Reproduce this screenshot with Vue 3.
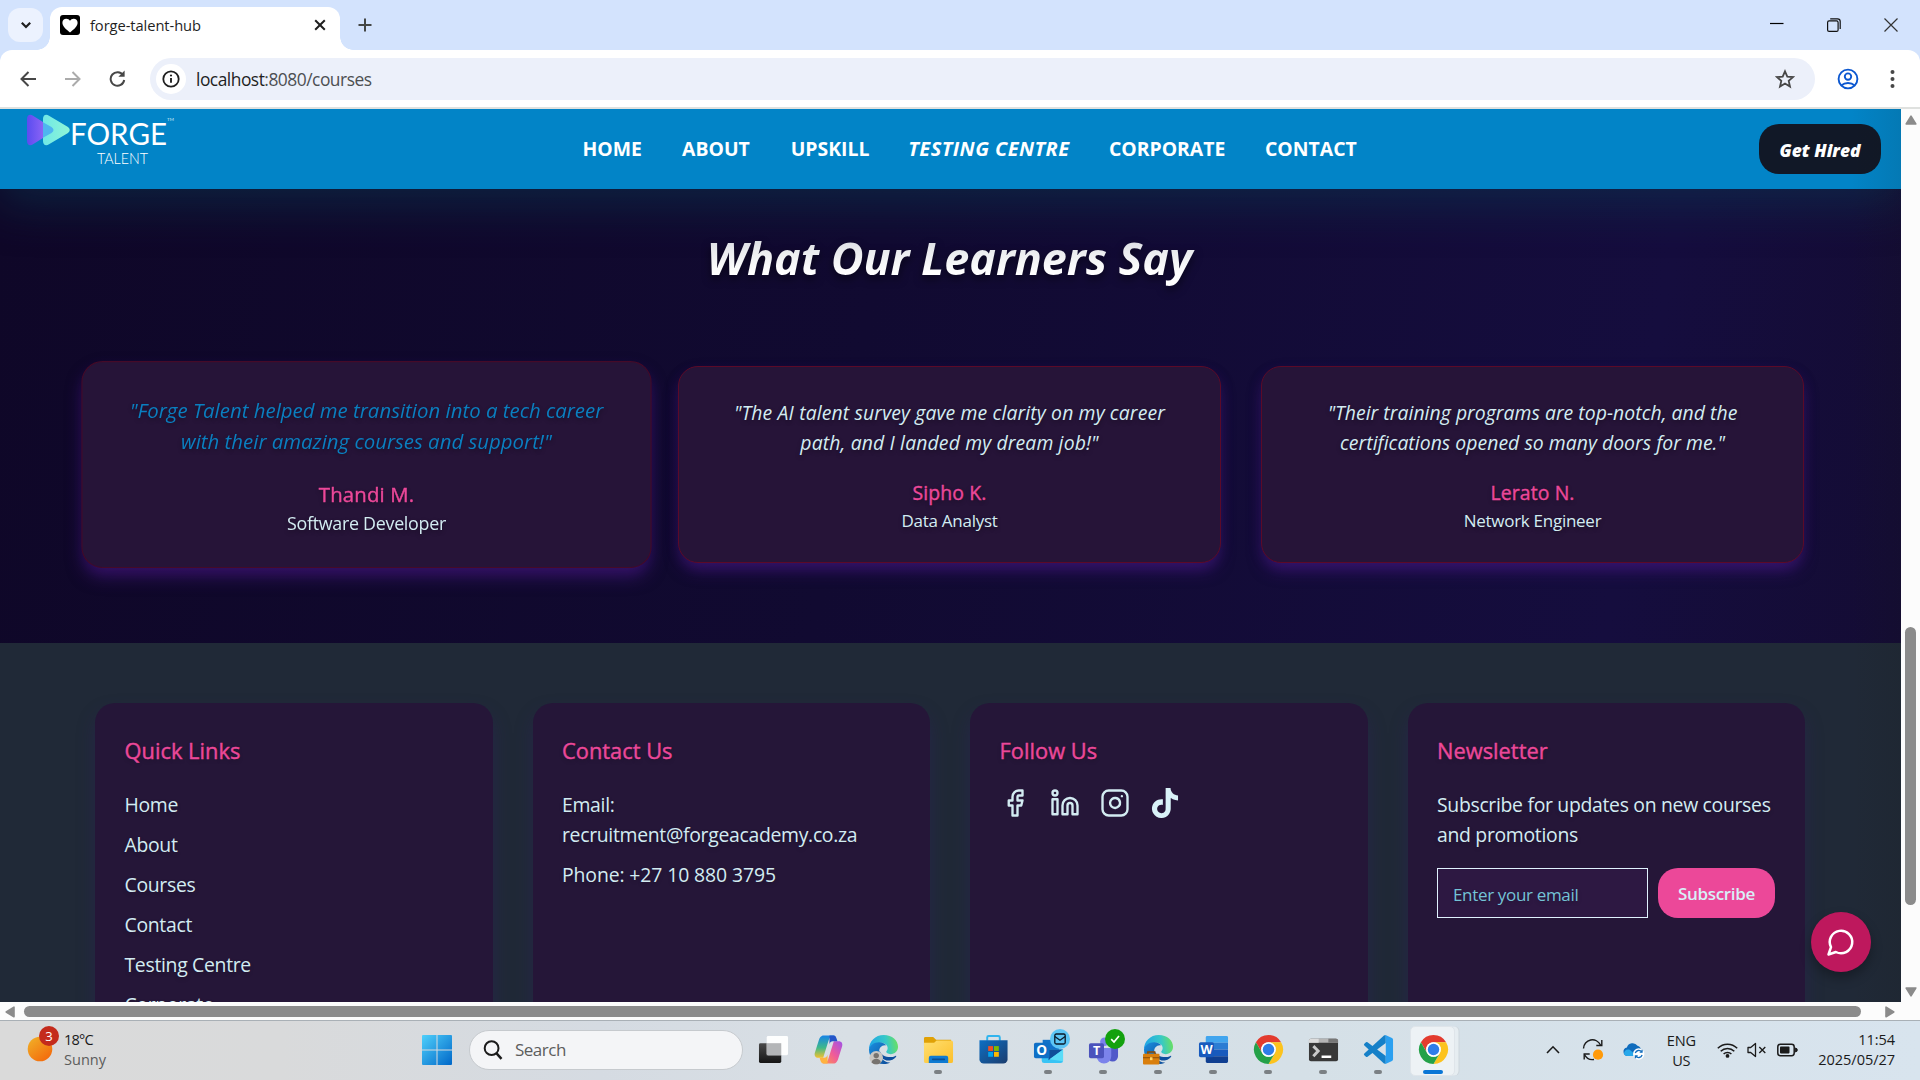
<script setup>
const nav = [
  { label: 'HOME', w: 60 },
  { label: 'ABOUT', w: 69 },
  { label: 'UPSKILL', w: 78 },
  { label: 'TESTING CENTRE', w: 161, active: true },
  { label: 'CORPORATE', w: 116.5 },
  { label: 'CONTACT', w: 92 },
]

const testimonials = [
  {
    lines: ['"Forge Talent helped me transition into a tech career', 'with their amazing courses and support!"'],
    name: 'Thandi M.',
    role: 'Software Developer',
    hovered: true,
  },
  {
    lines: ['"The AI talent survey gave me clarity on my career', 'path, and I landed my dream job!"'],
    name: 'Sipho K.',
    role: 'Data Analyst',
  },
  {
    lines: ['"Their training programs are top-notch, and the', 'certifications opened so many doors for me."'],
    name: 'Lerato N.',
    role: 'Network Engineer',
  },
]

const links = ['Home', 'About', 'Courses', 'Contact', 'Testing Centre', 'Corporate']

const apps = [
  { id: 'taskview' },
  { id: 'copilot' },
  { id: 'edge' },
  { id: 'files', running: true },
  { id: 'store' },
  { id: 'outlook', running: true },
  { id: 'teams', running: true },
  { id: 'edgework', running: true },
  { id: 'word', running: true },
  { id: 'chrome', running: true },
  { id: 'terminal', running: true },
  { id: 'code', running: true },
  { id: 'chrome', current: true },
]
</script>

<template>
  <div class="screen">
    <header class="tabstrip">
      <button class="tab-search">
        <svg width="12" height="12" viewBox="0 0 12 12"><path d="M1.800 3.800 6 8l4.200-4.200" fill="none" stroke="#1f1f1f" stroke-width="2.200" /></svg>
      </button>
      <div class="tab">
        <span class="favicon">
          <svg width="16" height="15" viewBox="0 0 16 15"><path d="M8 14.500C4 11 .4 8.400.4 4.700.4 2.300 2.100.700 4.300.700 5.900.700 7.200 1.500 8 2.800 8.800 1.500 10.100.700 11.700.700c2.200 0 3.900 1.600 3.900 4C15.600 8.400 12 11 8 14.500z" fill="#fff" /></svg>
        </span>
        <span class="tab-title">forge-talent-hub</span>
        <svg class="tab-close" width="12" height="12" viewBox="0 0 12 12"><path d="M1.200 1.200l9.600 9.600M10.800 1.200l-9.600 9.600" stroke="#1f1f1f" stroke-width="2" /></svg>
      </div>
      <svg class="tab-new" width="14" height="14" viewBox="0 0 14 14"><path d="M7 .5v13M.5 7h13" stroke="#444746" stroke-width="2" /></svg>
      <div class="window-controls">
        <svg width="14" height="14" viewBox="0 0 14 14"><path d="M0 5.500h13.500" stroke="#000" stroke-width="1.200" /></svg>
        <svg width="14" height="14" viewBox="0 0 14 14"><g fill="none" stroke="#111" stroke-width="1.200"><rect x=".6" y="2.900" width="10.500" height="10.500" rx="1.500" /><path d="M3.200.8h7.300a2.700 2.700 0 0 1 2.700 2.700v7.400" /></g></svg>
        <svg width="14" height="14" viewBox="0 0 14 14"><path d="M.5.5l13 13M13.500.5l-13 13" stroke="#333" stroke-width="1.200" /></svg>
      </div>
    </header>

    <div class="toolbar-wrap">
      <div class="toolbar">
        <svg class="ic-back" width="16" height="16" viewBox="0 0 16 16"><path d="M8.500 1 1.500 8l7 7M1.500 8H16" fill="none" stroke="#474747" stroke-width="2" /></svg>
        <svg class="ic-fwd" width="16" height="16" viewBox="0 0 16 16"><path d="M7.500 1l7 7-7 7M14.500 8H0" fill="none" stroke="#ababab" stroke-width="2" /></svg>
        <svg class="ic-reload" width="17" height="17" viewBox="0 0 17 17"><path d="M14.200 5.300A6.800 6.800 0 1 0 15.200 10" fill="none" stroke="#474747" stroke-width="2" /><path d="M15.600.6v6.200H9.400z" fill="#474747" /></svg>
        <div class="address">
          <span class="site-info">
            <svg width="18" height="18" viewBox="0 0 18 18"><circle cx="9" cy="9" r="7.700" fill="none" stroke="#1f1f1f" stroke-width="1.800" /><path d="M9 8v4.800" stroke="#1f1f1f" stroke-width="1.900" /><circle cx="9" cy="5.500" r="1.100" fill="#1f1f1f" /></svg>
          </span>
          <span class="url">localhost<span class="rest">:8080/courses</span></span>
          <svg class="ic-star" width="20" height="20" viewBox="0 0 20 20"><path d="M10 2.300l2.300 5.300 5.700.5-4.300 3.800 1.300 5.700-5-3-5 3 1.300-5.700L2 8.100l5.700-.5z" fill="none" stroke="#474747" stroke-width="1.800" /></svg>
        </div>
        <svg class="ic-user" width="22" height="22" viewBox="0 0 22 22"><g fill="none" stroke="#0b57d0" stroke-width="1.900"><circle cx="11" cy="11" r="9.400" /><circle cx="11" cy="8.600" r="3.200" /><path d="M4.300 17.500c3.700-3.300 9.700-3.300 13.400 0" /></g></svg>
        <svg class="ic-more" width="5" height="20" viewBox="0 0 5 20"><g fill="#474747"><circle cx="2.500" cy="3" r="2" /><circle cx="2.500" cy="10" r="2" /><circle cx="2.500" cy="17" r="2" /></g></svg>
      </div>
    </div>

    <div class="viewport">
      <main class="page">
        <nav class="navbar">
          <svg class="logo" width="150" height="56" viewBox="0 0 150 56">
            <defs>
              <linearGradient id="lgViolet" x1="0" y1="0" x2="1" y2="0"><stop offset="0" stop-color="#5a4cf0" /><stop offset="1" stop-color="#8a63f5" /></linearGradient>
              <linearGradient id="lgMint" x1="0" y1="0" x2="1" y2="0"><stop offset="0" stop-color="#6fe8e6" /><stop offset="1" stop-color="#8ff5d6" /></linearGradient>
            </defs>
            <path d="M0 5C0 1 3-.3 6 1.700L16 8V24L6 30.300C3 32.300 0 31 0 27z" fill="url(#lgViolet)" />
            <path d="M16 5C16 1 19-.3 22 1.700L41 13q3.500 3 0 6L22 30.300C19 32.300 16 31 16 27z" fill="url(#lgMint)" />
            <path d="M16 8.200L24.500 13q4 3 0 6L16 23.800z" fill="#4fb4f0" />
            <text class="logo-word" x="43" y="31" textLength="97" lengthAdjust="spacingAndGlyphs">FORGE</text>
            <text class="logo-tm" x="140" y="7">TM</text>
            <text class="logo-sub" x="70" y="50" textLength="51" lengthAdjust="spacingAndGlyphs">TALENT</text>
          </svg>
          <div class="nav-links">
            <a v-for="n in nav" :key="n.label" :class="{ active: n.active }" :style="{ width: n.w + 'px' }">{{ n.label }}</a>
          </div>
          <button class="hire">Get Hired</button>
        </nav>

        <section class="testimonials">
          <h2>What Our Learners Say</h2>
          <div class="cards">
            <article v-for="t in testimonials" :key="t.name" class="card" :class="{ hovered: t.hovered }">
              <p class="quote"><span v-for="l in t.lines" :key="l">{{ l }}</span></p>
              <p class="name">{{ t.name }}</p>
              <p class="role">{{ t.role }}</p>
            </article>
          </div>
        </section>

        <footer class="footer">
          <div class="fcard">
            <h3>Quick Links</h3>
            <ul><li v-for="l in links" :key="l">{{ l }}</li></ul>
          </div>
          <div class="fcard">
            <h3>Contact Us</h3>
            <ul><li>Email:<br />recruitment@forgeacademy.co.za</li><li class="phone">Phone: +27 10 880 3795</li></ul>
          </div>
          <div class="fcard">
            <h3>Follow Us</h3>
            <div class="social">
              <svg viewBox="0 0 24 24"><path d="M18 2h-3a5 5 0 0 0-5 5v3H7v4h3v8h4v-8h3l1-4h-4V7a1 1 0 0 1 1-1h3z" /></svg>
              <svg viewBox="0 0 24 24"><path d="M16 8a6 6 0 0 1 6 6v7h-4v-7a2 2 0 0 0-2-2 2 2 0 0 0-2 2v7h-4v-7a6 6 0 0 1 6-6z" /><rect x="2" y="9" width="4" height="12" /><circle cx="4" cy="4" r="2" /></svg>
              <svg viewBox="0 0 24 24"><rect x="2" y="2" width="20" height="20" rx="5" /><path d="M16 11.370A4 4 0 1 1 12.630 8 4 4 0 0 1 16 11.370zM17.500 6.500h.01" /></svg>
              <svg viewBox="0 0 24 24" class="solid"><path d="M12.525.02c1.310-.02 2.610-.01 3.910-.02.08 1.530.63 3.090 1.750 4.170 1.120 1.110 2.700 1.620 4.240 1.790v4.030c-1.440-.05-2.890-.35-4.200-.97-.57-.26-1.100-.59-1.620-.93-.01 2.920.01 5.840-.02 8.750-.08 1.400-.54 2.790-1.350 3.940-1.310 1.920-3.580 3.170-5.910 3.210-1.430.08-2.860-.31-4.080-1.030-2.020-1.190-3.440-3.370-3.650-5.710-.02-.5-.03-1-.01-1.490.18-1.900 1.120-3.720 2.580-4.960 1.660-1.440 3.980-2.130 6.150-1.720.02 1.480-.04 2.960-.04 4.440-.99-.32-2.150-.23-3.020.37-.63.41-1.110 1.040-1.360 1.750-.21.51-.15 1.070-.14 1.610.24 1.640 1.820 3.020 3.500 2.870 1.120-.01 2.190-.66 2.770-1.610.19-.33.4-.67.41-1.060.1-1.790.06-3.570.07-5.360.01-4.030-.01-8.050.02-12.070z" /></svg>
            </div>
          </div>
          <div class="fcard">
            <h3>Newsletter</h3>
            <p class="blurb">Subscribe for updates on new courses<br />and promotions</p>
            <div class="signup">
              <div class="email">Enter your email</div>
              <button>Subscribe</button>
            </div>
          </div>
        </footer>

        <div class="edge-shade"></div>
        <button class="chat">
          <svg width="30" height="30" viewBox="0 0 24 24"><path d="M7.900 20A9 9 0 1 0 4 16.100L2 22Z" fill="none" stroke="#fff" stroke-width="2" stroke-linejoin="round" /></svg>
        </button>
      </main>
      <div class="vscroll">
        <svg width="12" height="10" viewBox="0 0 12 10"><path d="M6 1.200 10.800 9H1.200z" fill="#8b8b8b" stroke="#8b8b8b" stroke-width="1.600" stroke-linejoin="round" /></svg>
        <span class="vthumb"></span>
        <svg width="12" height="10" viewBox="0 0 12 10"><path d="M6 8.800 10.800 1H1.200z" fill="#8b8b8b" stroke="#8b8b8b" stroke-width="1.600" stroke-linejoin="round" /></svg>
      </div>
    </div>
    <div class="hscroll">
      <svg width="10" height="12" viewBox="0 0 10 12"><path d="M1.200 6 9 1.200v9.600z" fill="#8b8b8b" stroke="#8b8b8b" stroke-width="1.600" stroke-linejoin="round" /></svg>
      <span class="hthumb"></span>
      <svg width="10" height="12" viewBox="0 0 10 12"><path d="M8.800 6 1 1.200v9.600z" fill="#8b8b8b" stroke="#8b8b8b" stroke-width="1.600" stroke-linejoin="round" /></svg>
    </div>

    <div class="taskbar">
      <svg width="0" height="0" class="defs">
        <defs>
          <linearGradient id="gSun" x1="0" y1="0" x2=".8" y2="1"><stop offset="0" stop-color="#f0b429" /><stop offset="1" stop-color="#f4680b" /></linearGradient>
          <linearGradient id="gWin" x1="0" y1="0" x2="1" y2="1"><stop offset="0" stop-color="#4fd0fb" /><stop offset="1" stop-color="#0067c8" /></linearGradient>
          <linearGradient id="gEdgeTop" x1="0" y1=".5" x2="1" y2=".4"><stop offset="0" stop-color="#1fa4e8" /><stop offset=".6" stop-color="#36c8c8" /><stop offset="1" stop-color="#6be060" /></linearGradient>
          <linearGradient id="gEdgeLow" x1="0" y1="0" x2="1" y2="1"><stop offset="0" stop-color="#1b8fe0" /><stop offset="1" stop-color="#0b4a97" /></linearGradient>
          <linearGradient id="gCopL" x1="0" y1="0" x2="0" y2="1"><stop offset="0" stop-color="#1683e8" /><stop offset=".55" stop-color="#3fb98a" /><stop offset="1" stop-color="#f2c12e" /></linearGradient>
          <linearGradient id="gCopR" x1="1" y1="0" x2="0" y2="1"><stop offset="0" stop-color="#a052e8" /><stop offset=".5" stop-color="#ef5b9a" /><stop offset="1" stop-color="#ff9a4a" /></linearGradient>
          <linearGradient id="gFolder" x1="0" y1="0" x2="1" y2="1"><stop offset="0" stop-color="#ffdf70" /><stop offset="1" stop-color="#fcbf2b" /></linearGradient>
          <linearGradient id="gStore" x1="0" y1="0" x2="1" y2="1"><stop offset="0" stop-color="#0d6fc4" /><stop offset="1" stop-color="#1c3d6e" /></linearGradient>
          <linearGradient id="gTask" x1="0" y1="0" x2="0" y2="1"><stop offset="0" stop-color="#4a4a4a" /><stop offset="1" stop-color="#151515" /></linearGradient>
          <symbol id="edgeMark" viewBox="0 0 32 32">
            <path d="M1 16C1 7.500 7.500 1 16.300 1 25 1 31 6.600 31 13.200c0 4.600-3.400 7.600-7.600 7.600-3 0-4.600-1.200-4.600-2.400 0-1 1.500-1.500 1.500-4 0-3-3-5.400-7-5.400C7 9 2 13 1 16z" fill="url(#gEdgeTop)" />
            <path d="M1 16C2 11.500 6.500 8.600 11.500 8.600c3.600 0 6.200 1.400 7.500 3.300-4.500-1-8 2.500-7.400 7.200C12.300 24.500 17 30 23 29.300 20.800 30.500 18.500 31 16 31 7.600 31 1 24.500 1 16z" fill="url(#gEdgeLow)" />
            <path d="M12 17c-1 7 5 11.500 11.500 10.200 2.500-.6 4.600-2.200 5.600-3.900.3-.6-.2-1-.8-.7C23 25.300 13.500 23.500 12 17z" fill="#0d4f9e" />
          </symbol>
          <symbol id="chromeMark" viewBox="0 0 32 32">
            <path d="M29 8.500A15 15 0 0 0 3 8.500L9.500 19.750A7.500 7.500 0 0 1 16 8.500z" fill="#e33b2e" />
            <path d="M29 8.500A15 15 0 0 0 3 8.500L9.500 19.750A7.500 7.500 0 0 1 16 8.500z" fill="#fcc31e" transform="rotate(120 16 16)" />
            <path d="M29 8.500A15 15 0 0 0 3 8.500L9.500 19.750A7.500 7.500 0 0 1 16 8.500z" fill="#24a148" transform="rotate(240 16 16)" />
            <circle cx="16" cy="16" r="7.500" fill="#fff" /><circle cx="16" cy="16" r="5.900" fill="#2f7de9" />
          </symbol>
        </defs>
      </svg>

      <div class="weather">
        <span class="sun"><svg width="26" height="26" viewBox="0 0 26 26"><circle cx="13" cy="13" r="12.300" fill="url(#gSun)" /></svg><b class="count">3</b></span>
        <span class="wtext"><span class="temp">18°C</span><span class="cond">Sunny</span></span>
      </div>

      <div class="launcher">
        <svg class="win" width="30" height="30" viewBox="0 0 30 30"><path d="M0 1a1 1 0 0 1 1-1h13.500v14.500H0zM15.500 0H29a1 1 0 0 1 1 1v13.500H15.500zM0 15.500h14.500V30H1a1 1 0 0 1-1-1zM15.500 15.500H30V29a1 1 0 0 1-1 1H15.500z" fill="url(#gWin)" /></svg>
        <div class="search">
          <svg width="20" height="20" viewBox="0 0 20 20"><g fill="none" stroke="#1b1b1b" stroke-width="2"><circle cx="8.600" cy="8.200" r="6.900" /><path d="M13.300 13.200 18.500 18.800" stroke-width="2.500" /></g></svg>
          <span>Search</span>
        </div>
        <div v-for="(a, i) in apps" :key="i" class="app" :class="{ running: a.running, current: a.current }">
          <svg width="32" height="32" viewBox="0 0 32 32">
            <template v-if="a.id === 'taskview'"><rect x="1" y="9.500" width="23" height="20.500" rx="1.500" fill="url(#gTask)" /><rect x="9" y="2" width="22" height="20" rx="1.500" fill="#fff" opacity=".95" /><rect x="9" y="9.500" width="15" height="12.500" fill="#b4b6b8" /></template>
            <template v-else-if="a.id === 'copilot'">
              <path d="M21 1.500H11C8 1.500 6.800 4 6 6.500L2 19c-1 3.200.5 5.500 3.500 5.500h5L16 7c.8-2.500 1.500-4 3-4h4C22.800 2 22 1.500 21 1.500z" fill="url(#gCopL)" />
              <path d="M11 30.500h10c3 0 4.200-2.500 5-5l4-12.500c1-3.200-.5-5.500-3.500-5.500h-5L16 25c-.8 2.500-1.500 4-3 4H9c.2 1 1 1.500 2 1.500z" fill="url(#gCopR)" />
              <path d="M17 1.500h4c2 0 2.800 1.300 3.400 3.300l.8 2.700h-4.700c-2 0-2.800.9-3.500 3z" fill="#2455c8" />
              <path d="M15 30.500h-4c-2 0-2.800-1.300-3.400-3.300l-.8-2.700h4.700c2 0 2.800-.9 3.500-3z" fill="#ffb340" />
            </template>
            <template v-else-if="a.id === 'edge'"><use href="#edgeMark" /><circle cx="8.500" cy="24.500" r="7" fill="#c9c6c2" /><circle cx="8.500" cy="22.300" r="2.800" fill="#77736f" /><path d="M3.700 29.300c.6-5 9-5 9.600 0-2.500 2.600-7 2.600-9.600 0z" fill="#77736f" /></template>
            <template v-else-if="a.id === 'files'"><path d="M1 4.500A1.500 1.500 0 0 1 2.500 3h8l3 3H29v6H1z" fill="#e0a106" /><path d="M1 9h10.500l2.500-2.300h15a2 2 0 0 1 2 2V28a2 2 0 0 1-2 2H3a2 2 0 0 1-2-2z" fill="url(#gFolder)" /><path d="M6 30v-5.500a2 2 0 0 1 2-2h16a2 2 0 0 1 2 2V30z" fill="#0f7bd2" /><path d="M10 26.200h12" stroke="#0a4f94" stroke-width="1.600" stroke-linecap="round" /></template>
            <template v-else-if="a.id === 'store'"><path d="M9.500 7V3.500a1.500 1.500 0 0 1 1.500-1.500h10a1.500 1.500 0 0 1 1.500 1.500V7" fill="none" stroke="#30b4ee" stroke-width="2" /><path d="M1.500 6.500h29V26a4.500 4.500 0 0 1-4.500 4.500H6A4.500 4.500 0 0 1 1.500 26z" fill="url(#gStore)" /><path d="M10.500 12.500h5v5h-5z" fill="#f25022" /><path d="M16.500 12.500h5v5h-5z" fill="#7fba00" /><path d="M10.500 18.500h5v5h-5z" fill="#00a4ef" /><path d="M16.500 18.500h5v5h-5z" fill="#ffb900" /></template>
            <template v-else-if="a.id === 'outlook'"><path d="M10 6h17v14H10z" fill="#1272c9" /><path d="M9 16h22v11.500a2.500 2.500 0 0 1-2.500 2.500h-17A2.500 2.500 0 0 1 9 27.500z" fill="#38c4f5" /><path d="M16 16h15L16 27z" fill="#0f4f9a" /><path d="M31 16v12L17 26z" fill="#5adcf8" /><rect x="1" y="9" width="16" height="16" rx="1.800" fill="#0f6fc6" /><text x="9" y="22" class="glyph">O</text></template>
            <template v-else-if="a.id === 'teams'"><circle cx="26" cy="10" r="3.500" fill="#5059c9" /><path d="M20 14.500h11V23a5.500 5.500 0 0 1-11 0z" fill="#5059c9" /><circle cx="17" cy="8" r="4.500" fill="#7b83eb" /><path d="M9 14.500h15V23a7.500 7.500 0 0 1-15 0z" fill="#7b83eb" /><rect x="1" y="9.500" width="15.500" height="15.500" rx="1.800" fill="#4b53bc" /><text x="8.800" y="22" class="glyph tee">T</text></template>
            <template v-else-if="a.id === 'edgework'"><use href="#edgeMark" /><path d="M5 21v-2.500h7V21" fill="none" stroke="#8a4b06" stroke-width="1.600" /><rect x="0" y="20.500" width="17" height="11" rx="1" fill="#d97f0d" /><path d="M0 24.500h17" stroke="#8a4b06" stroke-width="1" /><rect x="7.200" y="24" width="2.600" height="3" fill="#ffd76b" /></template>
            <template v-else-if="a.id === 'word'"><path d="M8 3.500A1.500 1.500 0 0 1 9.500 2h20A1.500 1.500 0 0 1 31 3.500V9H8z" fill="#41a5ee" /><path d="M8 9h23v7H8z" fill="#2b7cd3" /><path d="M8 16h23v7H8z" fill="#185abd" /><path d="M8 23h23v5.500a1.500 1.500 0 0 1-1.500 1.500h-20A1.500 1.500 0 0 1 8 28.500z" fill="#103f91" /><rect x="1" y="8.500" width="15.500" height="15.500" rx="1.800" fill="#185abd" /><text x="8.800" y="21" class="glyph tee">W</text></template>
            <use v-else-if="a.id === 'chrome'" href="#chromeMark" />
            <template v-else-if="a.id === 'terminal'"><rect x="1" y="5" width="30" height="23" rx="2" fill="#383838" /><path d="M1 9V7a2 2 0 0 1 2-2h26a2 2 0 0 1 2 2v2z" fill="#b5b5b5" /><path d="M1 9V7a2 2 0 0 1 2-2h8v4z" fill="#dcdcdc" /><path d="M21 5h8a2 2 0 0 1 2 2v2H21z" fill="#777" /><path d="M5.500 12.500 10.500 17.500 5.500 23" fill="none" stroke="#c9c9c9" stroke-width="3" /><path d="M14 23.500h10" stroke="#fff" stroke-width="2.600" /></template>
            <g v-else transform="translate(1 1) scale(1.25)"><path d="M18 .2 17.100.3a1.500 1.500 0 0 0-.6.200L.3 15.260a1 1 0 0 0 0 1.480L1.650 17.940a1 1 0 0 0 1.276.057L18 6.550zM18 17.450 2.930 6a1 1 0 0 0-1.276.057L.327 7.261A1 1 0 0 0 .326 8.740L16.500 23.500l1.500.300z" fill="#1580c8" /><path d="M23.150 2.587 18.210.21a1.490 1.490 0 0 0-1.700.29c.55-.55 1.500-.16 1.500.62v21.760c0 .78-.95 1.170-1.500.62a1.490 1.490 0 0 0 1.700.29l4.940-2.380A1.500 1.500 0 0 0 24 20.060V3.940a1.500 1.500 0 0 0-.85-1.353z" fill="#2ba0f0" /></g>
          </svg>
          <span v-if="a.id === 'outlook'" class="badge mail"><svg width="12" height="12" viewBox="0 0 12 12"><g fill="none" stroke="#0a1a2a" stroke-width="1.300"><rect x=".8" y="1" width="10.400" height="10" rx="1.500" /><path d="M.8 3.500 6 7.200l5.200-3.700" /></g></svg></span>
          <span v-if="a.id === 'teams'" class="badge ok"><svg width="10" height="10" viewBox="0 0 10 10"><path d="M1.200 5.200 4 8l5-6" fill="none" stroke="#fff" stroke-width="1.700" /></svg></span>
        </div>
      </div>

      <div class="tray">
        <svg class="t-up" width="14" height="9" viewBox="0 0 14 9"><path d="M1 8l6-6.200L13 8" fill="none" stroke="#1b1b1b" stroke-width="1.600" /></svg>
        <svg class="t-sync" width="22" height="22" viewBox="0 0 22 22"><g fill="none" stroke="#1b1b1b" stroke-width="1.400"><path d="M1.500 9.500A8.900 8.900 0 0 1 18.500 6" /><path d="M19.800 1v5.500h-5.500" /><path d="M2.200 20.500V15h5.500" /><path d="M2.500 15.500a9 9 0 0 0 9.500 5" /></g><circle cx="16" cy="15.700" r="5.100" fill="#ff9a0a" /></svg>
        <svg class="t-cloud" width="22" height="18" viewBox="0 0 22 18"><path d="M4.500 14a4.300 4.300 0 0 1-.6-8.500A6 6 0 0 1 14.500 3.800 5 5 0 0 1 18 9l-3 5z" fill="#0f6cbd" /><path d="M1 11.500c0-3 3-5 6-3.500l7 6H4.500C2.500 14 1 13 1 11.500z" fill="#28a8ea" /><circle cx="15.700" cy="12" r="5.700" fill="#fff" /><g fill="none" stroke="#0f6cbd" stroke-width="1.300"><path d="M12.300 11a3.700 3.700 0 0 1 6.400-1.200M19.100 13a3.700 3.700 0 0 1-6.400 1.200" /><path d="M19 7.800v2.300h-2.300M12.400 16.200v-2.300h2.300" /></g></svg>
        <div class="lang"><span>ENG</span><span>US</span></div>
        <svg class="t-wifi" width="21" height="16" viewBox="0 0 21 16"><g fill="none" stroke="#1b1b1b" stroke-width="1.500"><path d="M.8 6.200a13.700 13.700 0 0 1 19.400 0" /><path d="M3.700 9.200a9.600 9.600 0 0 1 13.600 0" /><path d="M6.600 12a5.600 5.600 0 0 1 7.800 0" /></g><circle cx="10.500" cy="13.900" r="1.900" fill="#1b1b1b" /></svg>
        <svg class="t-vol" width="20" height="16" viewBox="0 0 20 16"><g fill="none" stroke="#1b1b1b" stroke-width="1.300"><path d="M1 5.500h2.700L8.500 1.500v13L3.700 10.500H1z" stroke-linejoin="round" /><path d="M12.300 5l6 6M18.300 5l-6 6" /></g></svg>
        <svg class="t-bat" width="21" height="14" viewBox="0 0 21 14"><rect x=".8" y="1.300" width="16.400" height="11.400" rx="2.600" fill="none" stroke="#1b1b1b" stroke-width="1.500" /><rect x="3" y="3.600" width="9.500" height="6.800" rx=".8" fill="#1b1b1b" /><path d="M18.300 5v4l1.800-.9V5.900z" fill="#1b1b1b" stroke="#1b1b1b" /></svg>
        <div class="clock"><span>11:54</span><span>2025/05/27</span></div>
      </div>
    </div>
  </div>
</template>

<style>
body { margin: 0; overflow: hidden; }
</style>

<style scoped>
* { box-sizing: border-box; }
svg { display: block; flex: none; }
p, h2, h3, ul { margin: 0; padding: 0; list-style: none; }
button { border: 0; font-family: inherit; padding: 0; display: flex; align-items: center; justify-content: center; }
.screen {
  width: 1920px; height: 1080px; overflow: hidden;
  display: flex; flex-direction: column;
  font-family: "Open Sans", "Noto Sans", sans-serif;
  background: #d3e3fd;
}

/* browser chrome */
.tabstrip { height: 50px; flex: none; display: flex; padding-left: 8px; background: #d3e3fd; }
.tab-search { width: 35px; height: 34px; margin: 8px 7px 0 0; border-radius: 12px; background: #ecf2fe; }
.tab { position: relative; width: 290px; height: 43px; margin-top: 7px; padding: 0 14px 7px 10px; border-radius: 12px 12px 0 0; background: #fff; display: flex; align-items: center; }
.tab::before, .tab::after { content: ""; position: absolute; bottom: 0; width: 13px; height: 13px; }
.tab::before { left: -13px; background: radial-gradient(circle at 0 0, transparent 12.5px, #fff 13px); }
.tab::after { right: -13px; background: radial-gradient(circle at 100% 0, transparent 12.5px, #fff 13px); }
.favicon { width: 20px; height: 20px; border-radius: 3px; background: #000; display: flex; align-items: center; justify-content: center; }
.tab-title { margin-left: 10px; font-size: 14.7px; letter-spacing: -0.07px; color: #1f1f1f; flex: 1; }
.tab-new { margin: 18px 0 0 18px; }
.window-controls { margin: 18px 22px 0 auto; display: flex; gap: 43px; }
.toolbar-wrap { flex: none; height: 59px; background: linear-gradient(#d3e3fd 20px, #fff 20px); }
.toolbar { height: 59px; background: #fff; border-radius: 12px 12px 0 0; border-bottom: 2px solid #dfe1df; display: flex; align-items: center; padding-left: 20px; }
.ic-fwd { margin-left: 29px; }
.ic-reload { margin-left: 28px; }
.address { margin-left: 24px; width: 1665px; height: 42px; border-radius: 21px; background: #ecf0fa; display: flex; align-items: center; padding: 0 20px 0 6px; }
.site-info { width: 30px; height: 30px; border-radius: 50%; background: #fff; display: flex; align-items: center; justify-content: center; }
.url { margin-left: 10px; font-size: 17.4px; letter-spacing: -0.5px; color: #1f1f1f; flex: 1; }
.rest { color: #4c4f52; }
.ic-user { margin-left: 22px; }
.ic-more { margin-left: 31px; }

/* page */
.viewport { flex: none; height: 893px; display: flex; overflow: hidden; }
.page { position: relative; width: 1901px; height: 893px; overflow: hidden; display: flex; flex-direction: column; }
.navbar { position: relative; z-index: 1; flex: none; height: 80px; background: #0284c7; display: flex; align-items: center; padding: 0 20px 0 27px; box-shadow: 0 14px 46px rgba(9, 62, 86, .5); }
.logo { margin-bottom: 14px; }
.logo-word { font: 400 31px Lato, sans-serif; fill: #fff; }
.logo-tm { font: 400 4.5px Lato, sans-serif; fill: #cfe9f6; }
.logo-sub { font: 300 16px Lato, sans-serif; fill: #fff; }
.nav-links { margin-left: 405.5px; display: flex; gap: 39.6px; font-size: 19.4px; font-weight: 700; color: #fff; line-height: 30px; white-space: nowrap; }
.nav-links .active { font-style: italic; font-size: 20px; letter-spacing: .45px; }
.hire { margin-left: auto; width: 122px; height: 50px; padding-top: 1px; border-radius: 20px; background: #111827; color: #fff; font-size: 17.4px; font-style: italic; font-weight: 800; letter-spacing: 0; }

.testimonials { flex: none; height: 454px; padding: 38px 97px 0 95px; background: linear-gradient(100deg, #0f0728 0%, #110a31 45%, #150d3e 85%, #140c34 100%); }
h2 { text-align: center; font-size: 45px; line-height: 62px; font-style: italic; font-weight: 700; letter-spacing: -.08px; color: transparent; background: linear-gradient(#d5d8de, #fff 75%); -webkit-background-clip: text; background-clip: text; filter: drop-shadow(0 4px 4px rgba(0, 0, 0, .5)); }
.cards { margin-top: 77px; display: flex; gap: 40px; }
.card { flex: 1; height: 197px; padding-top: 31px; border: 1px solid #5b0a28; border-radius: 20px; background: #261438; text-align: center; box-shadow: 0 10px 16px -3px rgba(88, 28, 155, .5), 0 4px 14px rgba(50, 20, 110, .16); text-shadow: 0 2px 4px rgba(0, 0, 0, .35); color: #d3ecf2; }
.card.hovered { transform: scale(1.05); border-color: #450a28; }
.quote { font-size: 19.4px; line-height: 30px; font-style: italic; letter-spacing: .13px; }
.quote span { display: block; }
.card:last-child .quote { letter-spacing: .03px; }
.card.hovered .quote { color: #0a7fc0; letter-spacing: .02px; }
.name { margin-top: 20px; font-size: 19.4px; line-height: 30px; font-weight: 500; letter-spacing: .13px; color: #ec4899; -webkit-text-stroke: .4px #ec4899; }
.role { font-size: 17px; line-height: 25px; letter-spacing: -.27px; }

.footer { flex: 1; min-height: 0; padding: 60px 96px 0 95px; background: #202937; display: flex; gap: 40px; color: #d3ecf2; font-size: 19.4px; line-height: 30px; letter-spacing: -.31px; }
.fcard { flex: 1 0 0; height: 420px; padding: 30px 30px 30px 29.5px; border-radius: 20px; background: #251638; box-shadow: 0 10px 18px rgba(49, 32, 105, .35); text-shadow: 0 2px 4px rgba(0, 0, 0, .2); }
h3 { font-size: 21.8px; line-height: 35px; font-weight: 500; letter-spacing: .03px; color: #ec4899; margin-bottom: 20px; -webkit-text-stroke: .4px #ec4899; }
ul, .blurb { padding-top: 1.5px; }
li { margin-bottom: 10px; }
.phone { letter-spacing: -.11px; }
.social { display: flex; gap: 20px; }
.social svg { width: 30px; height: 30px; fill: none; stroke: #d3ecf2; stroke-width: 1.9; stroke-linecap: round; stroke-linejoin: round; }
.social .solid { fill: #d9f2f8; stroke: none; }
.signup { margin-top: 18.5px; display: flex; gap: 10px; }
.email { width: 211px; height: 50px; padding: 1px 0 0 15px; border: 1px solid #e0f2fe; background: #2d1842; color: #74c3d6; font-size: 17px; line-height: 49px; letter-spacing: -.33px; }
.signup button { width: 117px; height: 50px; padding-top: 1px; border-radius: 20px; background: #ec4899; color: #d8eff8; font-size: 17px; font-weight: 600; letter-spacing: -.34px; }
.edge-shade { position: absolute; z-index: 2; top: 0; right: 0; width: 50px; height: 100%; background: linear-gradient(90deg, transparent, rgba(20, 25, 15, .1)); }
.chat { position: absolute; z-index: 3; left: 1811px; top: 803px; width: 60px; height: 60px; border-radius: 50%; background: #be185d; box-shadow: 0 6px 12px rgba(0, 0, 0, .3); }

.vscroll { width: 19px; background: #fcfcfc; display: flex; flex-direction: column; align-items: center; padding: 6px 0 5px; }
.vthumb { width: 11px; height: 278px; margin: 502px 0 auto; border-radius: 6px; background: #8b8b8b; }
.hscroll { flex: none; height: 18px; background: #fcfcfc; display: flex; align-items: center; padding: 1px 25px 0 5px; }
.hthumb { width: 1837px; height: 11px; margin: 0 auto 0 9px; border-radius: 6px; background: #8b8b8b; }

/* taskbar */
.taskbar { position: relative; flex: none; height: 60px; border-top: 1px solid #a9b0b6; background: linear-gradient(90deg, #dadada 0, #d9dadb 280px, #d5dbe2 600px, #d8dfe5 850px, #d5e0e7 1300px, #d8e4ee 1920px); display: flex; align-items: center; font-size: 14.55px; color: #1b1b1b; }
.defs { position: absolute; }
.weather { width: 394px; padding-left: 27px; display: flex; align-items: center; }
.sun { position: relative; margin-top: -3px; }
.count { position: absolute; left: 12px; top: -10px; width: 20px; height: 20px; border-radius: 50%; background: #c42b1c; color: #fff; font-size: 13px; line-height: 20px; font-weight: 400; text-align: center; }
.wtext { margin: -4px 0 0 11px; display: flex; flex-direction: column; line-height: 20px; }
.temp { letter-spacing: -.8px; }
.cond { color: #5c5c5c; }
.launcher { display: flex; align-items: center; }
.win { margin: -2px 0 0 28px; }
.search { width: 274px; height: 40px; margin: -2px 2.5px 0 17px; padding-left: 13px; border-radius: 20px; border: 1px solid #c6cace; background: #f4f5f7; display: flex; align-items: center; font-size: 17px; letter-spacing: -.5px; color: #5d5d5d; }
.search span { margin-left: 12px; }
.app { position: relative; width: 55px; height: 59px; display: flex; align-items: center; justify-content: center; }
.app > svg { position: relative; width: 31px; height: 31px; margin-top: -2px; }
.app::after { content: ""; position: absolute; left: 50%; bottom: 6px; height: 4px; border-radius: 2px; }
.running::after { width: 8px; margin-left: -4px; background: #7b8084; }
.current::after { width: 20px; margin-left: -10px; background: #0a76d6; }
.current::before { content: ""; position: absolute; left: 4px; top: 5px; width: 43px; height: 48px; border-radius: 5px; background: #edf2f5; border: 1px solid #dfe5ea; box-shadow: 4px 0 0 -.5px #e6edf1, 5px 0 0 -.5px #cdd6dc; }
.badge { position: absolute; left: 29px; top: 8px; width: 20px; height: 20px; border-radius: 50%; display: flex; align-items: center; justify-content: center; }
.mail { background: #5cc5f5; }
.ok { background: #13a10e; }
.glyph { font: 700 14px "Open Sans", sans-serif; fill: #fff; text-anchor: middle; }
.tee { font-size: 13px; }
.tray { margin: -2px 25px 0 auto; display: flex; align-items: center; }
.t-sync { margin-left: 22px; }
.t-cloud { margin: 2px 0 0 19px; }
.lang { width: 36px; margin-left: 18px; text-align: center; letter-spacing: -.2px; }
.lang, .clock { display: flex; flex-direction: column; line-height: 20px; }
.t-wifi { margin-left: 18px; }
.t-vol { margin-left: 9px; }
.t-bat { margin-left: 10px; }
.clock { margin: -2px 0 0 20px; text-align: right; letter-spacing: -.05px; }
</style>
